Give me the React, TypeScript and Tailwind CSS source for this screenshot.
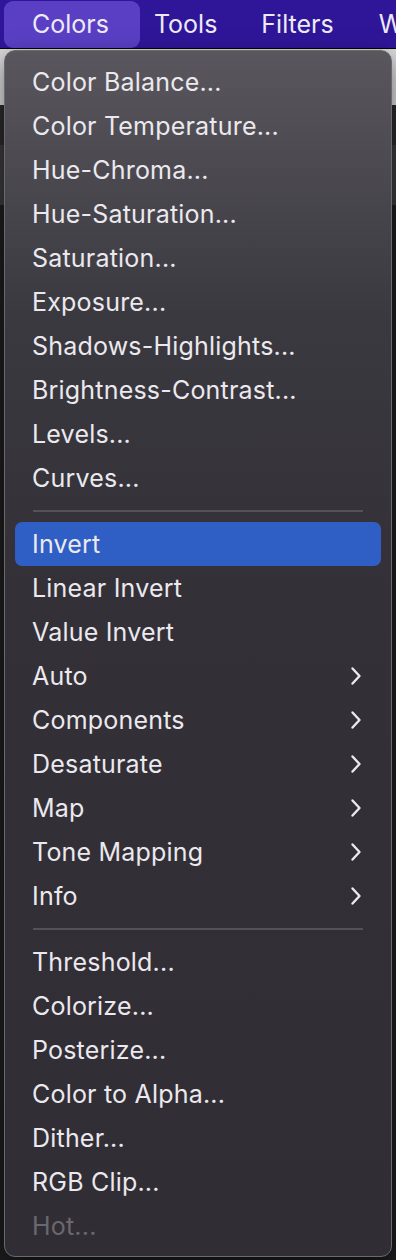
type Item = { label: string; sub?: boolean; active?: boolean; disabled?: boolean };

const groups: Item[][] = [
  [
    { label: "Color Balance..." },
    { label: "Color Temperature..." },
    { label: "Hue-Chroma..." },
    { label: "Hue-Saturation..." },
    { label: "Saturation..." },
    { label: "Exposure..." },
    { label: "Shadows-Highlights..." },
    { label: "Brightness-Contrast..." },
    { label: "Levels..." },
    { label: "Curves..." },
  ],
  [
    { label: "Invert", active: true },
    { label: "Linear Invert" },
    { label: "Value Invert" },
    { label: "Auto", sub: true },
    { label: "Components", sub: true },
    { label: "Desaturate", sub: true },
    { label: "Map", sub: true },
    { label: "Tone Mapping", sub: true },
    { label: "Info", sub: true },
  ],
  [
    { label: "Threshold..." },
    { label: "Colorize..." },
    { label: "Posterize..." },
    { label: "Color to Alpha..." },
    { label: "Dither..." },
    { label: "RGB Clip..." },
    { label: "Hot...", disabled: true },
  ],
];

function Chevron() {
  return (
    <svg width="14" height="20" viewBox="0 0 14 20" className="text-[#ebe9ee]">
      <path d="M3.5 2.5 L10.5 10 L3.5 17.5" fill="none" stroke="currentColor" strokeWidth="2.4" strokeLinecap="round" strokeLinejoin="round" />
    </svg>
  );
}

function MenuRow({ item }: { item: Item }) {
  return (
    <div
      className={`mx-[10px] flex h-[44px] items-center justify-between rounded-[7px] pl-[17px] pr-[18px] tracking-[0.2px] ${
        item.active ? "bg-[#2f5fc4]" : ""
      }`}
    >
      <span className={item.disabled ? "text-[#6a686e]" : "text-[#ebe9ee]"}>{item.label}</span>
      {item.sub && <Chevron />}
    </div>
  );
}

export default function App() {
  return (
    <div
      className="relative h-[1260px] w-[396px] overflow-hidden bg-[#1d1d1f] text-[25px] leading-none"
      style={{ fontFamily: "Inter, 'Liberation Sans', sans-serif" }}
    >
      {/* menu bar */}
      <div className="flex h-[49px] items-center border-b border-black bg-[#2f1699] text-[#ecebf5]">
        <div className="ml-[4px] flex h-[47px] items-center rounded-[9px] bg-[#5a3fc5] pl-[28px] pr-[31px]">Colors</div>
        <div className="ml-[14px]">Tools</div>
        <div className="ml-[44px]">Filters</div>
        <div className="ml-[45px]">W</div>
      </div>

      {/* window content behind the menu */}
      <div className="h-[56px] bg-[#d9d9db]" />
      <div className="h-[40px] bg-[#2a2a2c]" />
      <div className="h-[60px] bg-[#3a3a3c]" />

      {/* dropdown */}
      <div className="absolute left-[4px] top-[50px] flex h-[1207px] w-[388px] flex-col rounded-[11px] border border-[#6a696e] bg-[linear-gradient(180deg,#59575d_0%,#3b3940_22%,#333037_45%,#302d34_100%)] pt-[9px] shadow-[0_8px_24px_rgba(0,0,0,0.5)]">
        {groups.map((g, gi) => (
          <div key={gi}>
            {gi > 0 && (
              <div className="flex h-[22px] items-center px-[28px]">
                <div className="h-[2px] w-full bg-[#545258]" />
              </div>
            )}
            {g.map((it) => (
              <MenuRow key={it.label} item={it} />
            ))}
          </div>
        ))}
      </div>
    </div>
  );
}
